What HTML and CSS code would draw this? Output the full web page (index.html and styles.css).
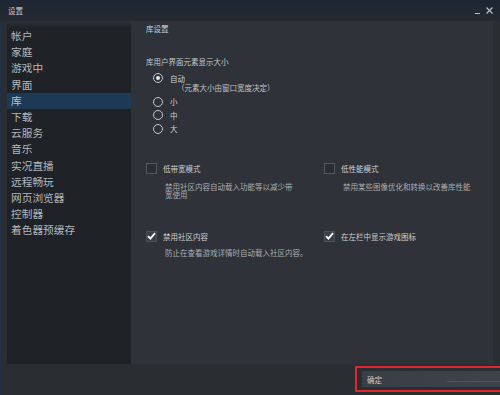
FILE: index.html
```html
<!DOCTYPE html>
<html lang="zh-CN">
<head>
<meta charset="utf-8">
<link rel="stylesheet" href="styles.css">
</head>
<body>
<div class="window">
  <div class="titlebar">
    <span class="title">设置</span>
    <div class="winctrl">
      <span class="minimize"></span>
      <svg class="close" width="7" height="7" viewBox="0 0 7 7"><path d="M0.5 0.5L6.5 6.5M6.5 0.5L0.5 6.5" stroke="#b9bdc2" stroke-width="1.3"/></svg>
    </div>
  </div>
  <div class="main">
    <nav class="sidebar">
      <div class="nav-item">帐户</div>
      <div class="nav-item">家庭</div>
      <div class="nav-item">游戏中</div>
      <div class="nav-item">界面</div>
      <div class="nav-item active">库</div>
      <div class="nav-item">下载</div>
      <div class="nav-item">云服务</div>
      <div class="nav-item">音乐</div>
      <div class="nav-item">实况直播</div>
      <div class="nav-item">远程畅玩</div>
      <div class="nav-item">网页浏览器</div>
      <div class="nav-item">控制器</div>
      <div class="nav-item">着色器预缓存</div>
    </nav>
    <section class="content">
      <div class="heading">库设置</div>
      <div class="group-label">库用户界面元素显示大小</div>
      <div class="radios">
        <div class="radio-row"><span class="radio checked"></span><span>自动</span></div>
        <div class="radio-sub">（元素大小由窗口宽度决定）</div>
        <div class="radio-row first-plain"><span class="radio"></span><span>小</span></div>
        <div class="radio-row"><span class="radio"></span><span>中</span></div>
        <div class="radio-row"><span class="radio"></span><span>大</span></div>
      </div>
      <div class="options first-options">
        <div class="option">
          <div class="check-row"><span class="checkbox"></span><span>低带宽模式</span></div>
          <div class="desc">禁用社区内容自动载入功能等以减少带宽使用</div>
        </div>
        <div class="option">
          <div class="check-row"><span class="checkbox"></span><span>低性能模式</span></div>
          <div class="desc">禁用某些图像优化和转换以改善库性能</div>
        </div>
      </div>
      <div class="options second-options">
        <div class="option">
          <div class="check-row"><span class="checkbox checked"><svg width="9" height="8" viewBox="0 0 9 8"><path d="M1 4.2L3.4 6.6L8 1.2" fill="none" stroke="#ffffff" stroke-width="1.8"/></svg></span><span>禁用社区内容</span></div>
          <div class="desc desc-tight">防止在查看游戏详情时自动载入社区内容。</div>
        </div>
        <div class="option">
          <div class="check-row"><span class="checkbox checked"><svg width="9" height="8" viewBox="0 0 9 8"><path d="M1 4.2L3.4 6.6L8 1.2" fill="none" stroke="#ffffff" stroke-width="1.8"/></svg></span><span>在左栏中显示游戏图标</span></div>
        </div>
      </div>
    </section>
  </div>
  <div class="footer">
    <div class="ok-frame">
      <div class="ok-button"><span>确定</span><span class="ok-line"></span></div>
    </div>
  </div>
</div>
</body>
</html>
```

FILE: styles.css
```css
html, body {
  margin: 0;
  padding: 0;
}
body {
  width: 500px;
  height: 395px;
  overflow: hidden;
  background: #2a2d32;
  font-family: "Noto Sans CJK SC", "Noto Sans", sans-serif;
}
.window {
  display: flex;
  flex-direction: column;
  width: 500px;
  height: 395px;
  background: #2a2d32;
  box-shadow: inset 1px 0 0 #1f3047;
}
.titlebar {
  height: 21px;
  display: flex;
  align-items: flex-start;
  justify-content: space-between;
  padding: 0 7px 0 8px;
  background: linear-gradient(#1d2634, #262a31);
}
.title {
  margin-top: 7px;
  font-size: 7.5px;
  line-height: 8px;
  color: #c9ccd0;
}
.winctrl {
  display: flex;
  align-items: flex-end;
  gap: 6px;
  margin-top: 7px;
}
.minimize {
  width: 5px;
  height: 1px;
  background: #b9bdc2;
}
.main {
  display: flex;
  height: 343px;
  margin: 0 7px;
}
.sidebar {
  width: 124px;
  padding-top: 7px;
  box-sizing: border-box;
  background: linear-gradient(#2b313a 0, #1f2227 7px, #1e2126 100%);
}
.nav-item {
  height: 16.2px;
  line-height: 16.2px;
  padding-left: 4px;
  font-size: 10.7px;
  color: #b3b7bb;
  white-space: nowrap;
}
.nav-item.active {
  background: #1c3955;
  color: #b8c4d0;
}
.content {
  flex: 1;
  background: #2f3238;
  padding-left: 15px;
  color: #cdd0d4;
  font-size: 7.5px;
}
.heading {
  margin-top: 3px;
  line-height: 10px;
}
.group-label {
  margin-top: 23px;
  line-height: 10px;
  color: #c4c7cb;
}
.radios {
  margin-top: 5px;
  padding-left: 7px;
}
.radio-row {
  display: flex;
  align-items: center;
  gap: 7px;
  height: 13.5px;
}
.radio-row:first-child {
  height: 12px;
}
.radio-row.first-plain {
  margin-top: 3px;
}
.radio {
  width: 10px;
  height: 10px;
  box-sizing: border-box;
  border: 1.4px solid #c3c6ca;
  border-radius: 50%;
  display: flex;
  align-items: center;
  justify-content: center;
}
.radio.checked::after {
  content: "";
  width: 4px;
  height: 4px;
  border-radius: 50%;
  background: #e6e8ea;
}
.radio-sub {
  padding-left: 24px;
  line-height: 8px;
  color: #c0c3c7;
  text-spacing-trim: space-all;
}
.options {
  display: grid;
  grid-template-columns: 178px 1fr;
}
.first-options {
  margin-top: 26.5px;
}
.second-options {
  margin-top: 31px;
}
.check-row {
  display: flex;
  align-items: center;
  gap: 6px;
  height: 12px;
}
.checkbox {
  width: 11px;
  height: 11px;
  box-sizing: border-box;
  border: 1px solid #55595f;
  background: #2a2d32;
  display: flex;
  align-items: center;
  justify-content: center;
}
.checkbox.checked {
  border-color: #4c5057;
  background: #3a3e45;
}
.desc {
  margin-top: 9px;
  padding-left: 19px;
  width: 131px;
  line-height: 8px;
  color: #a9adb1;
}
.desc-tight {
  margin-top: 7px;
  width: 160px;
}
.footer {
  flex: 1;
  display: flex;
  justify-content: flex-end;
  align-items: flex-start;
}
.ok-frame {
  margin-top: 2px;
  width: 150px;
  height: 26px;
  box-sizing: border-box;
  border: 2px solid #e2262b;
  margin-right: -5px;
  padding: 3px 0 3px 5px;
}
.ok-button {
  height: 100%;
  background: linear-gradient(90deg, #3a3f47, #3d424b);
  display: flex;
  align-items: center;
  font-size: 7.5px;
  color: #c7cbd0;
  padding-left: 5px;
}
.ok-line {
  margin-left: 65px;
  margin-top: 5px;
  flex: 1;
  height: 1px;
  background: #4e545d;
}
```
